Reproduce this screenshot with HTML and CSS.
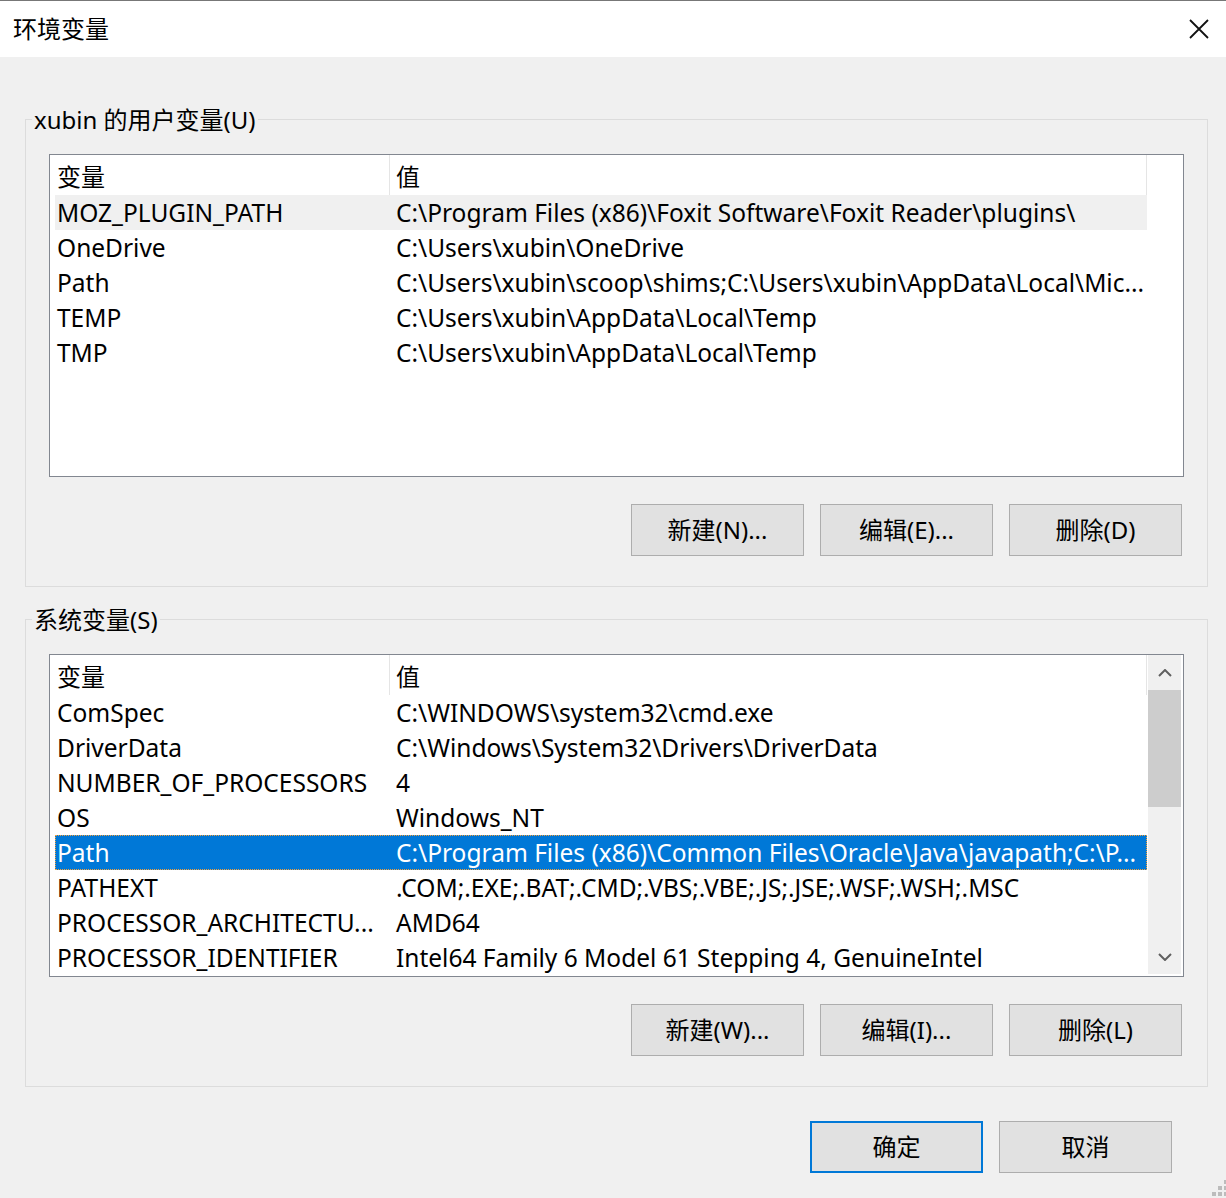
FILE: index.html
```html
<!DOCTYPE html>
<html lang="zh-CN">
<head>
  <meta charset="UTF-8" />
  <title>环境变量</title>
  <link rel="stylesheet" href="styles.css">
</head>
<body>
  <div class="window">
    <div class="titlebar">
      <span class="title">环境变量</span>
      <svg class="close" width="20" height="20" viewBox="0 0 20 20">
        <path d="M1 1L19 19M19 1L1 19" stroke="#111" stroke-width="1.8" fill="none"/>
      </svg>
    </div>

    <div class="content">
      <fieldset class="group">
        <legend>xubin 的用户变量(U)</legend>
        <div class="group-body">
          <div class="list">
            <div class="list-body">
              <div class="header">
                <div class="cell name">变量</div>
                <div class="cell value">值</div>
              </div>
              <div class="row hover">
                <div class="cell name">MOZ_PLUGIN_PATH</div>
                <div class="cell value">C:\Program Files (x86)\Foxit Software\Foxit Reader\plugins\</div>
              </div>
              <div class="row">
                <div class="cell name">OneDrive</div>
                <div class="cell value">C:\Users\xubin\OneDrive</div>
              </div>
              <div class="row">
                <div class="cell name">Path</div>
                <div class="cell value">C:\Users\xubin\scoop\shims;C:\Users\xubin\AppData\Local\Mic...</div>
              </div>
              <div class="row">
                <div class="cell name">TEMP</div>
                <div class="cell value">C:\Users\xubin\AppData\Local\Temp</div>
              </div>
              <div class="row">
                <div class="cell name">TMP</div>
                <div class="cell value">C:\Users\xubin\AppData\Local\Temp</div>
              </div>
            </div>
          </div>
          <div class="buttons">
            <div class="button">新建(N)...</div>
            <div class="button">编辑(E)...</div>
            <div class="button">删除(D)</div>
          </div>
        </div>
      </fieldset>

      <fieldset class="group">
        <legend>系统变量(S)</legend>
        <div class="group-body">
          <div class="list">
            <div class="list-body">
              <div class="header">
                <div class="cell name">变量</div>
                <div class="cell value">值</div>
              </div>
              <div class="row">
                <div class="cell name">ComSpec</div>
                <div class="cell value">C:\WINDOWS\system32\cmd.exe</div>
              </div>
              <div class="row">
                <div class="cell name">DriverData</div>
                <div class="cell value">C:\Windows\System32\Drivers\DriverData</div>
              </div>
              <div class="row">
                <div class="cell name">NUMBER_OF_PROCESSORS</div>
                <div class="cell value">4</div>
              </div>
              <div class="row">
                <div class="cell name">OS</div>
                <div class="cell value">Windows_NT</div>
              </div>
              <div class="row selected">
                <div class="cell name">Path</div>
                <div class="cell value">C:\Program Files (x86)\Common Files\Oracle\Java\javapath;C:\P...</div>
              </div>
              <div class="row">
                <div class="cell name">PATHEXT</div>
                <div class="cell value">.COM;.EXE;.BAT;.CMD;.VBS;.VBE;.JS;.JSE;.WSF;.WSH;.MSC</div>
              </div>
              <div class="row">
                <div class="cell name">PROCESSOR_ARCHITECTU...</div>
                <div class="cell value">AMD64</div>
              </div>
              <div class="row">
                <div class="cell name">PROCESSOR_IDENTIFIER</div>
                <div class="cell value">Intel64 Family 6 Model 61 Stepping 4, GenuineIntel</div>
              </div>
            </div>
            <div class="scrollbar">
              <div class="arrow">
                <svg width="14" height="8" viewBox="0 0 14 8"><path d="M1 7L7 1L13 7" stroke="#606060" stroke-width="2" fill="none"/></svg>
              </div>
              <div class="track"><div class="thumb"></div></div>
              <div class="arrow">
                <svg width="14" height="8" viewBox="0 0 14 8"><path d="M1 1L7 7L13 1" stroke="#606060" stroke-width="2" fill="none"/></svg>
              </div>
            </div>
          </div>
          <div class="buttons">
            <div class="button">新建(W)...</div>
            <div class="button">编辑(I)...</div>
            <div class="button">删除(L)</div>
          </div>
        </div>
      </fieldset>

      <div class="dialog-buttons">
        <div class="button default">确定</div>
        <div class="button">取消</div>
      </div>
    </div>

    <svg class="grip" width="16" height="20" viewBox="0 0 16 20">
      <rect x="2" y="14" width="4" height="4" fill="#bcbcbc"/>
      <rect x="8" y="14" width="4" height="4" fill="#bcbcbc"/>
      <rect x="14" y="14" width="4" height="4" fill="#bcbcbc"/>
      <rect x="8" y="8" width="4" height="4" fill="#bcbcbc"/>
      <rect x="14" y="8" width="4" height="4" fill="#bcbcbc"/>
      <rect x="14" y="2" width="4" height="4" fill="#bcbcbc"/>
    </svg>
  </div>
</body>
</html>
```

FILE: styles.css
```css
body {
  margin: 0;
  background: #f0f0f0;
  color: #000;
  font-family: "Noto Sans", "Noto Sans CJK SC", sans-serif;
  font-size: 24px;
}
.window {
  position: relative;
  height: 1198px;
  box-sizing: border-box;
  border-top: 1px solid #777;
  overflow: hidden;
}
.titlebar {
  height: 56px;
  box-sizing: border-box;
  padding: 0 0 4px 13px;
  background: #fff;
  display: flex;
  align-items: center;
  justify-content: space-between;
}
.close {
  margin: 4px 17px 0 0;
}
.content {
  padding: 47px 18px 0 25px;
}
.group {
  margin: 0;
  padding: 0;
  min-width: 0;
  border: 1px solid #dcdcdc;
}
.group + .group {
  margin-top: 17px;
}
.group legend {
  margin-left: 6px;
  padding: 0 2px;
  height: 31px;
  line-height: 31px;
}
.group-body {
  padding: 19px 23px 30px;
}
.list {
  display: flex;
  height: 321px;
  border: 1px solid #828790;
  background: #fff;
  overflow: hidden;
}
.list-body {
  width: 1092px;
  padding-left: 5px;
  flex-shrink: 0;
}
.header, .row {
  display: flex;
}
.header {
  height: 40px;
  line-height: 44px;
}
.row {
  height: 35px;
  line-height: 35px;
  font-size: 24.5px;
}
.cell {
  box-sizing: border-box;
  white-space: nowrap;
  overflow: hidden;
  text-overflow: ellipsis;
}
.cell.name {
  width: 335px;
  padding-left: 2px;
}
.cell.value {
  width: 757px;
  padding-left: 6px;
}
.header .cell {
  border-right: 1px solid #e5e5e5;
}
.row .cell.name {
  padding-right: 6px;
}
.row.hover {
  background: #f0f0f0;
}
.row.selected {
  background: #0078d7;
  color: #fff;
  outline: 1px dotted #f5a03a;
  outline-offset: -1px;
}
.scrollbar {
  width: 33px;
  margin: 0 2px 2px 1px;
  background: #f0f0f0;
  display: flex;
  flex-direction: column;
}
.arrow {
  height: 35px;
  display: flex;
  justify-content: center;
  align-items: center;
}
.track {
  flex: 1;
}
.thumb {
  height: 117px;
  background: #cdcdcd;
}
.buttons {
  display: flex;
  justify-content: flex-end;
  gap: 16px;
  margin: 27px 2px 0 0;
}
.button {
  width: 173px;
  height: 52px;
  box-sizing: border-box;
  padding-bottom: 3px;
  background: #e1e1e1;
  border: 1px solid #adadad;
  display: flex;
  justify-content: center;
  align-items: center;
}
.button.default {
  border: 2px solid #0078d7;
}
.dialog-buttons {
  display: flex;
  justify-content: flex-end;
  gap: 16px;
  margin: 34px 36px 0 0;
}
.grip {
  position: absolute;
  right: 0;
  bottom: 0;
}
```
